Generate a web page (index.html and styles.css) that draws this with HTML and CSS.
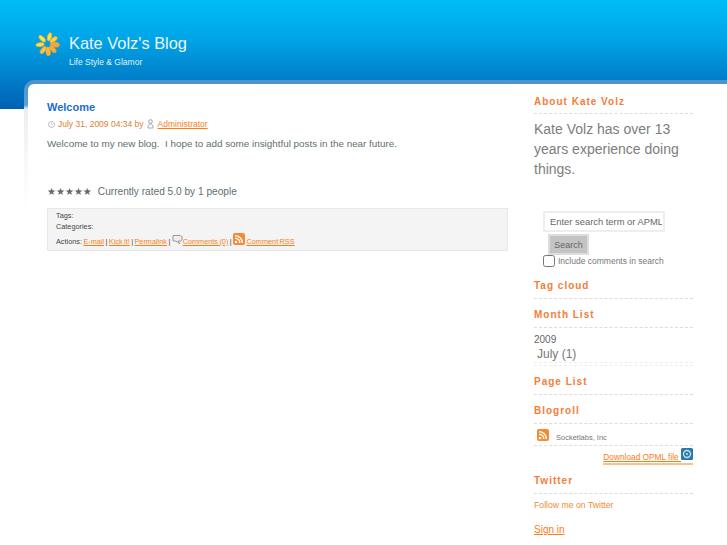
FILE: index.html
```html
<!DOCTYPE html>
<html lang="en">
<head>
    <meta charset="UTF-8">
    <title>Kate Volz's Blog</title>
    <link rel="stylesheet" href="styles.css">
</head>
<body>
    <div id="header">
        <svg class="logo" width="25" height="24" viewBox="-13 -12.5 26 25">
            <g stroke="#eda23c" stroke-width=".8">
                <ellipse fill="#f8e24a" cx="0" cy="-7.8" rx="2.1" ry="4.4" transform="rotate(15)"/>
                <ellipse fill="#f8d83a" cx="0" cy="-7.8" rx="2.1" ry="4.4" transform="rotate(55)"/>
                <ellipse fill="#f6a63a" cx="0" cy="-7.8" rx="2.5" ry="4.8" transform="rotate(95)"/>
                <ellipse fill="#f6b03a" cx="0" cy="-7.8" rx="2.1" ry="4.4" transform="rotate(135)"/>
                <ellipse fill="#f7b83a" cx="0" cy="-7.8" rx="2.3" ry="4.6" transform="rotate(175)"/>
                <ellipse fill="#f7c83a" cx="0" cy="-7.8" rx="2.1" ry="4.4" transform="rotate(215)"/>
                <ellipse fill="#f8e04a" cx="0" cy="-7.8" rx="2.1" ry="4.4" transform="rotate(265)"/>
                <ellipse fill="#f8e64a" cx="0" cy="-7.8" rx="2.1" ry="4.4" transform="rotate(315)"/>
            </g>
        </svg>
        <div class="brand">
            <h1>Kate Volz's Blog</h1>
            <p>Life Style &amp; Glamor</p>
        </div>
    </div>

    <div id="frame">
        <div id="page">
            <div id="content">
                <div class="post">
                    <h2>Welcome</h2>
                    <div class="meta">
                        <svg width="7" height="7" viewBox="0 0 7 7"><circle cx="3.5" cy="3.5" r="3" fill="none" stroke="#bbb"/><path d="M3.5 1.5v2h1.5" fill="none" stroke="#ccc" stroke-width=".7"/></svg>
                        <span class="date">July 31, 2009 04:34 by</span>
                        <svg class="user" width="7" height="10" viewBox="0 0 7 10"><circle cx="3.5" cy="2.5" r="1.8" fill="none" stroke="#999"/><path d="M1 9V7l1.5-2h2L6 7v2z" fill="none" stroke="#aaa"/></svg>
                        <a href="#">Administrator</a>
                    </div>
                    <p class="body">Welcome to my new blog.&nbsp; I hope to add some insightful posts in the near future.</p>
                    <div class="rating">
                        <span class="stars">★★★★★</span>
                        <span>Currently rated 5.0 by 1 people</span>
                    </div>
                    <div class="footer">
                        <div>Tags:</div>
                        <div>Categories:</div>
                        <div class="actions">
                            Actions: <a href="#">E-mail</a> | <a href="#">Kick it!</a> | <a href="#">Permalink</a> |
                            <svg class="bubble" width="11" height="11" viewBox="0 0 11 11"><path d="M1 1.5h7.5l1.5 1.5v3l-1.5 1H6L8 10 4 7H1z" fill="#eee" stroke="#999"/></svg><a href="#">Comments (0)</a> |
                            <svg class="rss" width="12" height="12" viewBox="0 0 12 12"><rect width="12" height="12" rx="2" fill="#f58a33"/><circle cx="3" cy="9" r="1.3" fill="#fff"/><path d="M2 5.2a4.8 4.8 0 0 1 4.8 4.8M2 2.6A7.4 7.4 0 0 1 9.4 10" fill="none" stroke="#fff" stroke-width="1.4"/></svg>
                            <a href="#">Comment RSS</a>
                        </div>
                    </div>
                </div>
            </div>

            <div id="sidebar">
                <div class="box">
                    <h3>About Kate Volz</h3>
                    <p class="about">Kate Volz has over 13 years experience doing things.</p>
                </div>
                <div class="search">
                    <input type="text" value="Enter search term or APML url">
                    <button type="button">Search</button>
                    <label><input type="checkbox"> Include comments in search</label>
                </div>
                <div class="box"><h3>Tag cloud</h3></div>
                <div class="box">
                    <h3>Month List</h3>
                    <div class="months">
                        <div class="year">2009</div>
                        <div class="month">July (1)</div>
                    </div>
                </div>
                <div class="box"><h3>Page List</h3></div>
                <div class="box">
                    <h3>Blogroll</h3>
                    <div class="roll">
                        <svg width="12" height="12" viewBox="0 0 12 12"><rect width="12" height="12" rx="2" fill="#f58a33"/><circle cx="3" cy="9" r="1.3" fill="#fff"/><path d="M2 5.2a4.8 4.8 0 0 1 4.8 4.8M2 2.6A7.4 7.4 0 0 1 9.4 10" fill="none" stroke="#fff" stroke-width="1.4"/></svg>
                        <span>Socketlabs, Inc</span>
                    </div>
                    <div class="opml">
                        <a href="#">Download OPML file <svg width="12" height="12" viewBox="0 0 12 12"><rect width="12" height="12" rx="1.5" fill="#2a78a8"/><circle cx="6" cy="6" r="3.5" fill="none" stroke="#bfe3f2" stroke-width="1.4"/><circle cx="6" cy="6" r="1" fill="#bfe3f2"/></svg></a>
                    </div>
                </div>
                <div class="box twitter">
                    <h3>Twitter</h3>
                    <div class="follow">Follow me on Twitter</div>
                </div>
                <a class="signin" href="#">Sign in</a>
            </div>
        </div>
    </div>
</body>
</html>
```

FILE: styles.css
```css
html, body {
    margin: 0;
    padding: 0;
    height: 545px;
    overflow: hidden;
}
body {
    font-family: "Liberation Sans", Arial, sans-serif;
    font-size: 10px;
    color: #5f6f6f;
    background: #fff;
}
a {
    color: #fb7d14;
    text-decoration: underline;
}
#header {
    height: 109px;
    box-sizing: border-box;
    padding: 32px 0 0 35px;
    display: flex;
    gap: 9px;
    background: linear-gradient(#00bdf6 0, #00a4e6 40px, #0060b2 100%);
}
.brand h1 {
    margin: 0;
    font-size: 16.4px;
    font-weight: normal;
    line-height: 22px;
    color: #e8f6fd;
}
.brand p {
    margin: 3px 0 0;
    font-size: 8.5px;
    line-height: 10px;
    color: #e0f0fa;
}
#frame {
    margin-top: -29px;
    margin-left: 24px;
    padding: 4px 0 0 4px;
    border-radius: 10px 0 0 0;
    background: linear-gradient(#4d93cc 0, #5d9ed2 25px, #e9eeee 29px, #f3f5f5 60px, #fff 130px);
}
#page {
    display: flex;
    height: 461px;
    padding-left: 19px;
    border-radius: 6px 0 0 0;
    background: #fff;
}
#content {
    width: 461px;
    padding-top: 17px;
}
.post h2 {
    margin: 0;
    font-size: 11px;
    line-height: 13px;
    color: #1a6fd0;
}
.meta {
    display: flex;
    align-items: center;
    gap: 3px;
    margin-top: 4px;
    height: 12px;
    font-size: 8.5px;
    color: #dd8030;
}
.meta svg {
    margin-left: 1px;
}
.meta .user {
    margin-left: 0;
}
.meta a {
    margin-left: 1px;
}
.body {
    margin: 7px 0 0;
    font-size: 9.85px;
    line-height: 13px;
}
.rating {
    margin-top: 35px;
    display: flex;
    align-items: center;
    gap: 6px;
    height: 13px;
    font-size: 10.15px;
}
.stars {
    font-family: "DejaVu Sans", sans-serif;
    font-size: 10px;
    color: #666;
}
.footer {
    margin-top: 10px;
    padding: 1px 7px 2px 8px;
    height: 38px;
    width: 444px;
    font-size: 7.3px;
    line-height: 11px;
    color: #444;
    background: #f4f4f4;
    border: 1px solid #e8e8e8;
}
.actions {
    margin-top: 1px;
    white-space: nowrap;
    word-spacing: -.6px;
}
.bubble, .rss {
    vertical-align: -1px;
}
#sidebar {
    width: 159px;
    margin-left: 26px;
    padding-top: 11px;
}
.box {
    margin-bottom: 9px;
}
.box h3 {
    margin: 0;
    padding-bottom: 6px;
    height: 13px;
    font-size: 10px;
    line-height: 13px;
    letter-spacing: 1px;
    color: #f47d3a;
    border-bottom: 1px dashed #ddd;
}
.box:first-child h3 {
    padding-bottom: 5px;
}
.about {
    margin: 5px 0 0;
    font-size: 14px;
    line-height: 20px;
    color: #7d7d7d;
}
.search {
    margin: 32px 0 12px;
    font-size: 8.5px;
    color: #777;
}
.search input[type=text] {
    display: block;
    box-sizing: border-box;
    width: 122px;
    height: 21px;
    margin: 0 0 0 9px;
    padding: 0 1px 0 5px;
    font-family: inherit;
    font-size: 9.4px;
    color: #666;
    background: #fff;
    border: 2px solid #eee;
}
.search button {
    display: block;
    box-sizing: border-box;
    width: 41px;
    height: 21px;
    margin: 2px 0 0 14px;
    padding: 0;
    font-family: inherit;
    font-size: 9px;
    color: #666;
    background: #c4c4c4;
    border: 2px solid #ddd;
}
.search label {
    display: flex;
    align-items: center;
    margin-left: 9px;
    gap: 3px;
}
.search input[type=checkbox] {
    width: 12px;
    height: 12px;
    margin: 0;
}
.months {
    padding-bottom: 2px;
    border-bottom: 1px dashed #eee;
}
.year {
    margin-top: 5px;
    line-height: 14px;
    color: #666;
}
.month {
    height: 15px;
    font-size: 12px;
    line-height: 15px;
    color: #777;
    padding-left: 3px;
    border-bottom: 1px dashed #eee;
}
.roll {
    display: flex;
    align-items: flex-start;
    gap: 7px;
    height: 16px;
    padding: 5px 0 0 3px;
    font-size: 7.5px;
    color: #777;
    border-bottom: 1px dashed #ddd;
}
.roll span {
    margin-top: 4px;
}
.opml {
    text-align: right;
    margin-top: 2px;
    line-height: 11px;
}
.opml a {
    display: inline-block;
    font-size: 8.3px;
    border-bottom: 2px solid #f9c090;
}
.twitter h3 {
    margin-top: 4px;
}
.follow {
    margin-top: 6px;
    font-size: 8.7px;
    color: #f48a30;
}
.signin {
    display: inline-block;
    margin-top: 5px;
    font-size: 10px;
}
```
